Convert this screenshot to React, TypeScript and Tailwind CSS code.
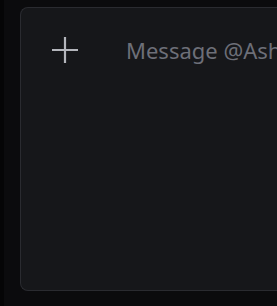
export default function App() {
  return (
    <div className="flex w-[277px] h-[306px] overflow-hidden bg-[#0b0b0d]">
      <div className="w-[4px] shrink-0 bg-[#050506]" />
      <div className="flex-1 pl-[16px] pt-[7px] pb-[15px]">
        <div className="h-full w-[300px] rounded-l-[8px] border border-r-0 border-[#2a2b30] bg-[#16171a] flex items-start">
          <button className="ml-[31px] mt-[29px] text-[#b4b6bc]">
            <svg width="26" height="26" viewBox="0 0 26 26" fill="none" stroke="currentColor" strokeWidth="2.2">
              <path d="M13 0v26M0 13h26" />
            </svg>
          </button>
          <input
            className="ml-[48px] mt-[26px] w-[200px] bg-transparent outline-none text-[22px] text-[#dbdee1] placeholder:text-[#6d6f78]"
            style={{ fontFamily: '"Noto Sans", sans-serif' }}
            placeholder="Message @Ash"
          />
        </div>
      </div>
    </div>
  )
}
